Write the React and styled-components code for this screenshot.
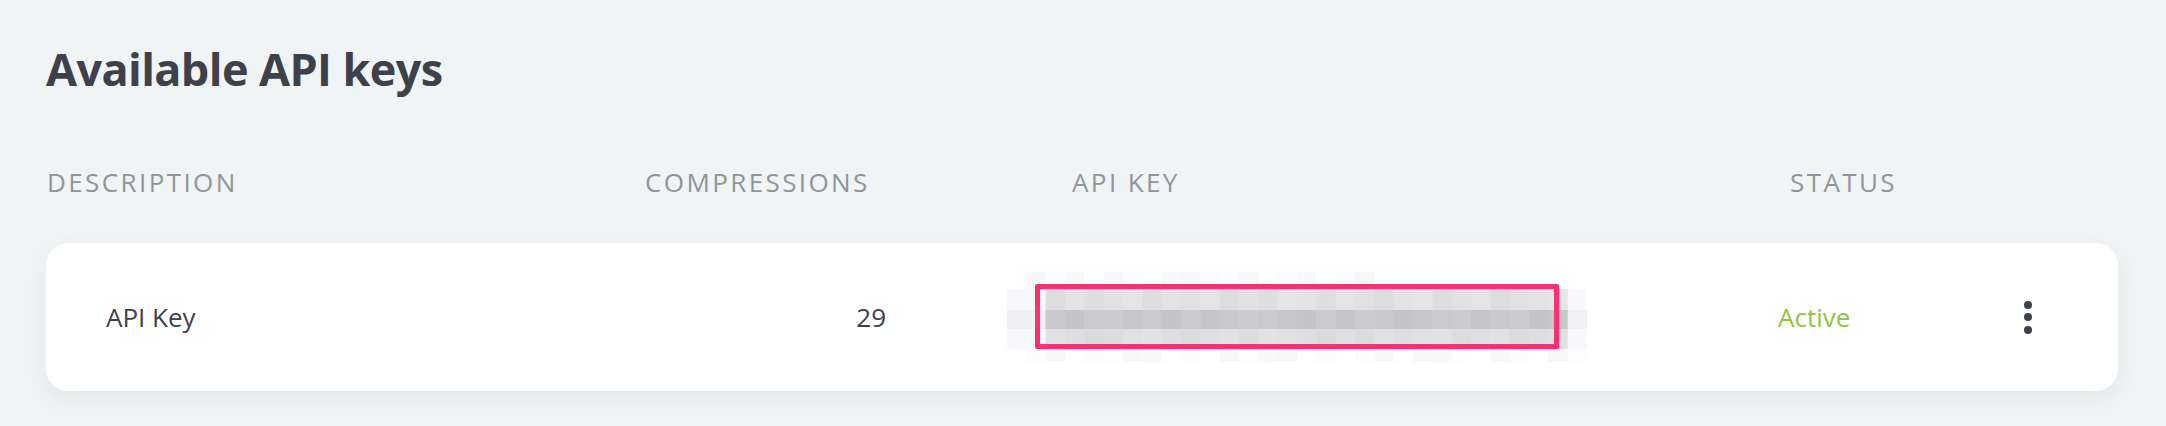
import React from "react";
import styled, { createGlobalStyle } from "styled-components";

const GlobalStyle = createGlobalStyle`
  body {
    margin: 0;
    background: #f1f4f5;
    font-family: "Open Sans", "Noto Sans", sans-serif;
  }
`;

const keys = [
  { description: "API Key", compressions: 29, status: "Active" },
];

// pixelated (blurred) key, one value per column for each band
const noise = [3, 0, 5, 2, 7, 1, 4, 6, 2, 0, 3, 5, 1, 6, 4, 2, 7, 3, 0, 5, 2, 4, 6, 1, 3, 5, 0, 2, 4, 1];
const rows = [
  { y: 0, h: 17, base: 247, halo: true },
  { y: 17, h: 21, base: 221 },
  { y: 38, h: 19, base: 197 },
  { y: 57, h: 20, base: 219 },
  { y: 77, h: 13, base: 247, halo: true },
];

function Mosaic() {
  const cols = noise.length;
  const cw = 580 / cols;
  return (
    <svg width="580" height="90" viewBox="0 0 580 90">
      {rows.map((r, ri) =>
        noise.map((n, ci) => {
          const x = ci * cw;
          const outside = x < 26 || x > 552;
          let v = r.base + ((n + ri * 3) % 8) * 1.2;
          if (r.halo) {
            if (ci < 1 || ci > (ri === 0 ? 18 : 29)) v = 255;
          } else if (outside) {
            v = 248 - (ri === 2 ? 8 : 0) + (n % 3);
          }
          v = Math.min(255, Math.round(v));
          return (
            <rect
              key={`${ri}-${ci}`}
              x={x}
              y={r.y}
              width={cw + 0.5}
              height={r.h}
              fill={`rgb(${v},${v},${Math.min(255, v + 2)})`}
            />
          );
        })
      )}
    </svg>
  );
}

export default function App() {
  return (
    <>
      <GlobalStyle />
      <Page>
        <Title>Available API keys</Title>
        <HeaderRow>
          <HeadCell $width={598}>Description</HeadCell>
          <HeadCell $width={427}>Compressions</HeadCell>
          <HeadCell $width={718}>API key</HeadCell>
          <HeadCell>Status</HeadCell>
        </HeaderRow>
        {keys.map((k) => (
          <Card key={k.description}>
            <NameCell>{k.description}</NameCell>
            <CountCell>{k.compressions}</CountCell>
            <KeyCell>
              <Mosaic />
              <Highlight />
            </KeyCell>
            <StatusCell>{k.status}</StatusCell>
            <MenuButton aria-label="More">
              <Dot />
              <Dot />
              <Dot />
            </MenuButton>
          </Card>
        ))}
      </Page>
    </>
  );
}

const Page = styled.main`
  width: 2166px;
  height: 426px;
  box-sizing: border-box;
  padding: 41px 48px 0 46px;
  overflow: hidden;
`;

const Title = styled.h1`
  margin: 0;
  font-size: 45px;
  line-height: 56px;
  font-weight: 700;
  letter-spacing: -0.6px;
  color: #3e414c;
`;

const HeaderRow = styled.div`
  display: flex;
  margin-top: 67px;
  padding-left: 1px;
`;

const HeadCell = styled.div`
  flex: ${(p) => (p.$width ? `0 0 ${p.$width}px` : "1")};
  font-size: 26px;
  line-height: 36px;
  letter-spacing: 2.4px;
  text-transform: uppercase;
  color: #8f959c;
`;

const Card = styled.div`
  display: flex;
  align-items: center;
  height: 148px;
  margin-top: 43px;
  padding: 0 70px 0 60px;
  background: #fff;
  border-radius: 22px;
  box-shadow: 0 8px 22px rgba(60, 72, 84, 0.08);
  font-size: 26px;
  color: #3d414c;
`;

const NameCell = styled.div`
  flex: 0 0 594px;
`;

const CountCell = styled.div`
  flex: 0 0 186px;
  text-align: right;
`;

const KeyCell = styled.div`
  position: relative;
  flex: 0 0 580px;
  height: 90px;
  margin-left: 121px;

  svg {
    display: block;
  }
`;

const Highlight = styled.div`
  position: absolute;
  left: 28px;
  top: 12px;
  width: 524px;
  height: 65px;
  box-sizing: border-box;
  border: 5px solid #ff2f72;
  border-radius: 2px;
`;

const StatusCell = styled.div`
  flex: 1;
  margin-left: 191px;
  color: #8dc63f;
`;

const MenuButton = styled.button`
  display: flex;
  flex-direction: column;
  align-items: center;
  gap: 4.5px;
  width: 40px;
  padding: 0;
  background: none;
  border: none;
  cursor: pointer;
`;

const Dot = styled.span`
  width: 8px;
  height: 8px;
  border-radius: 50%;
  background: #3d414c;
`;
